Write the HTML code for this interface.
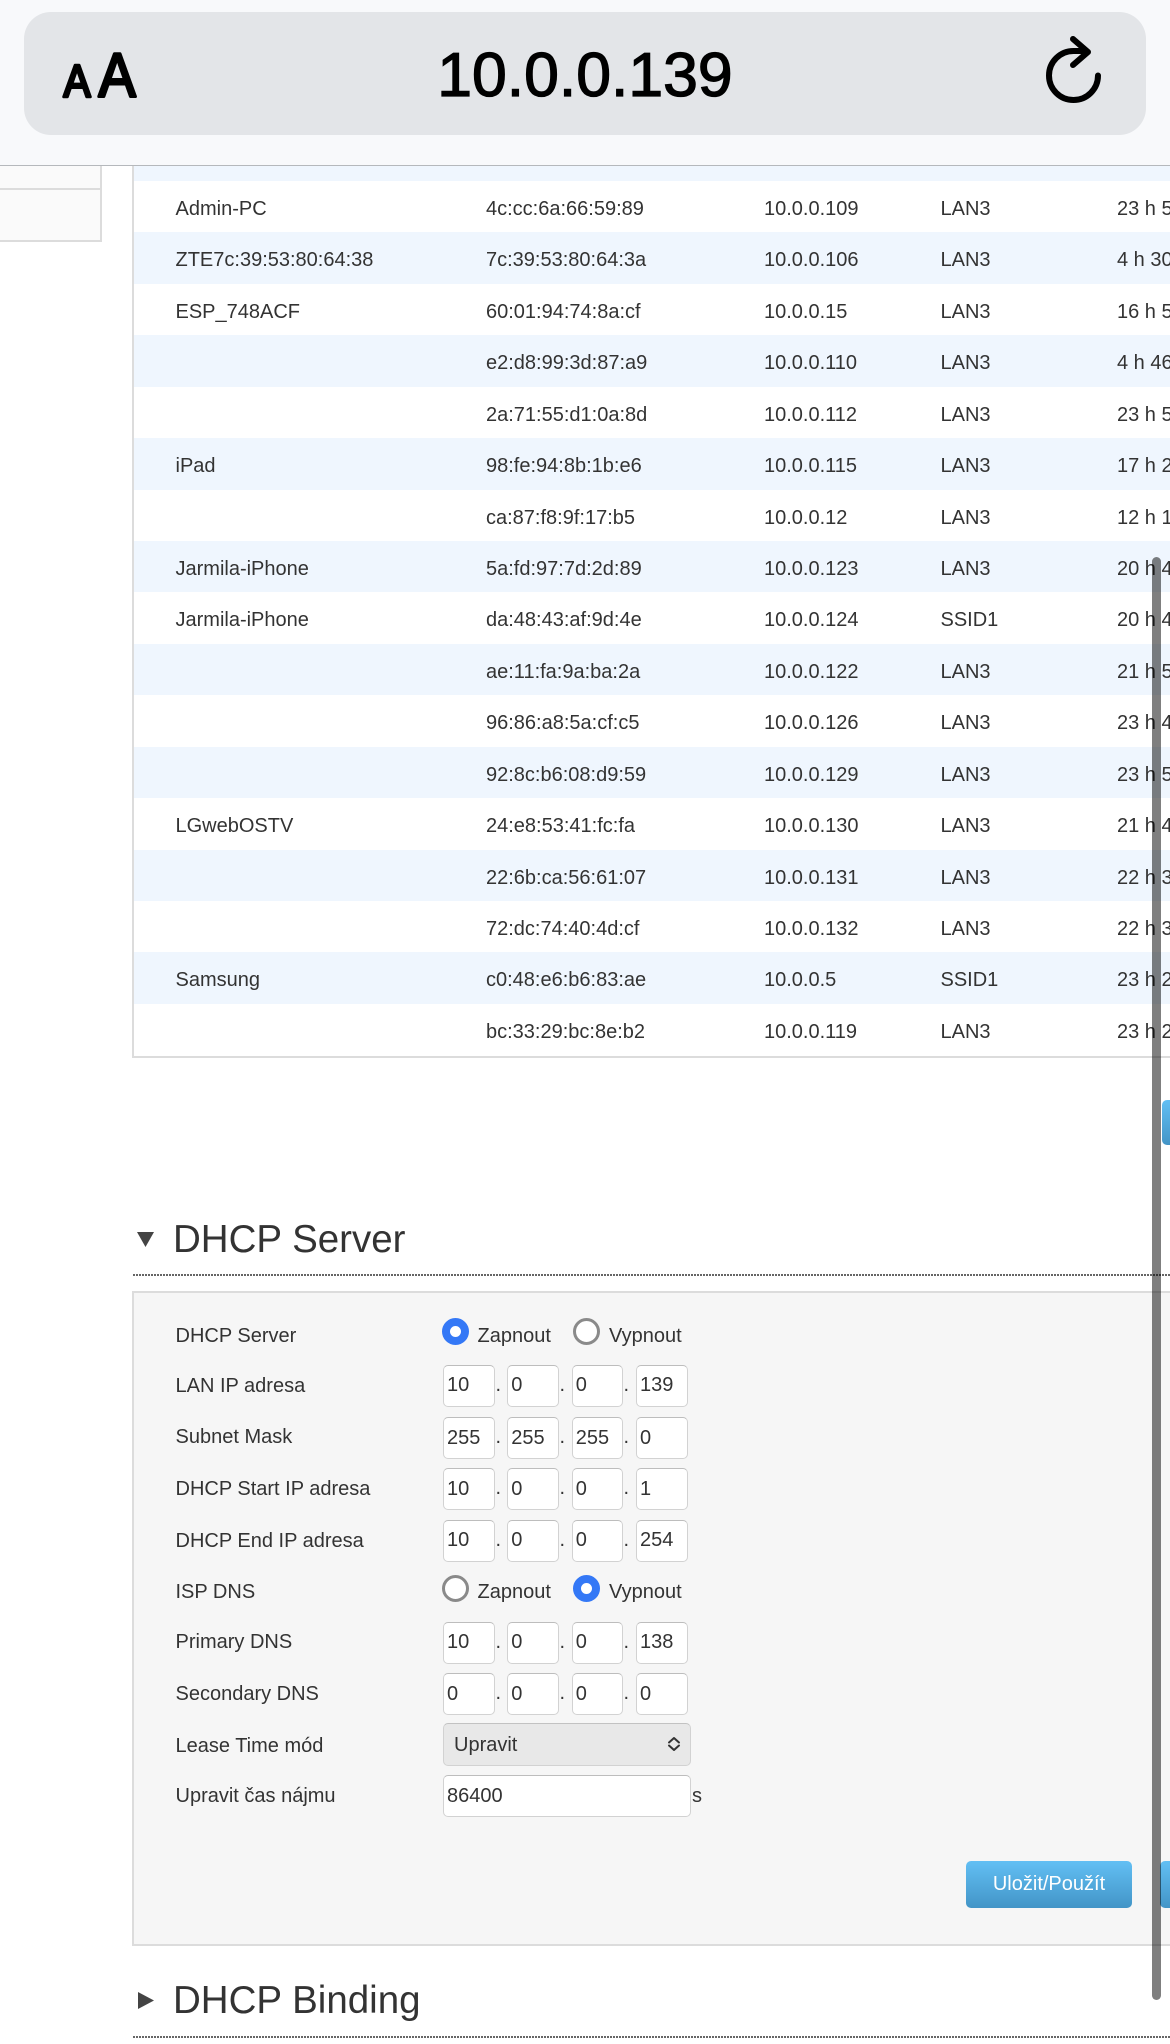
<!DOCTYPE html>
<html lang="cs"><head><meta charset="utf-8"><title>10.0.0.139</title>
<style>
html,body{margin:0;padding:0;background:#fff}
body{width:1170px;height:2044px;position:relative;overflow:hidden;font-family:"Liberation Sans",Arial,sans-serif;font-size:20px;color:#333}
div,span,svg{position:absolute;box-sizing:border-box}
.hdr{left:0;top:0;width:1170px;height:166px;background:#f8f9fb;border-bottom:1px solid #b5b8bc;z-index:5}
.bar{left:24px;top:12px;width:1122px;height:123px;background:#e3e5e8;border-radius:27px}
.url{left:0;width:1170px;top:39px;text-align:center;font-size:62.5px;line-height:72px;color:#000;-webkit-text-stroke:1.3px #000;white-space:nowrap}
.r{left:134px;width:1036px;height:51.43px;line-height:51.43px;white-space:nowrap}
.r span{top:3px}
.b{background:#eff6fe}
.r span:nth-child(1){left:41.500px}
.r span:nth-child(2){left:352px}
.r span:nth-child(3){left:630px}
.r span:nth-child(4){left:806.500px}
.r span:nth-child(5){left:983px}
.l{left:175.500px;line-height:24px;white-space:nowrap;margin-top:1px}
.i{width:51.500px;height:42px;background:#fff;border:1.500px solid #d2d2d2;border-top-color:#bdbdbd;border-radius:5px;line-height:39px;padding-left:3px;white-space:nowrap}
.i.p{line-height:41px}
.d{line-height:24px}
.rad{width:27px;height:27px;border-radius:50%;background:#fff;border:3px solid #8a8a8a}
.rad.on{border:8px solid #3478f6}
.h{font-size:38.500px;line-height:44px;white-space:nowrap;color:#333}
.dot{left:133px;width:1037px;height:2px;background:repeating-linear-gradient(90deg,#666 0 2px,transparent 2px 3px)}
.btn{border-radius:5px;background:linear-gradient(#62bff4,#4395c7);color:#fff;text-align:center;line-height:47px;white-space:nowrap}
</style></head><body>

<div style="left:0;top:166px;width:102px;height:76px;background:#fafafa;border-right:2px solid #dcdcdc;border-bottom:2px solid #dcdcdc"></div>
<div style="left:0;top:188px;width:102px;height:2px;background:#dcdcdc"></div>

<div class="b" style="left:134px;top:166px;width:1036px;height:15px"></div>
<div class="r" style="top:181px"><span>Admin-PC</span><span>4c:cc:6a:66:59:89</span><span>10.0.0.109</span><span>LAN3</span><span>23 h 59</span></div>
<div class="r b" style="top:232.400px"><span>ZTE7c:39:53:80:64:38</span><span>7c:39:53:80:64:3a</span><span>10.0.0.106</span><span>LAN3</span><span>4 h 30</span></div>
<div class="r" style="top:283.900px"><span>ESP_748ACF</span><span>60:01:94:74:8a:cf</span><span>10.0.0.15</span><span>LAN3</span><span>16 h 59</span></div>
<div class="r b" style="top:335.300px"><span></span><span>e2:d8:99:3d:87:a9</span><span>10.0.0.110</span><span>LAN3</span><span>4 h 46</span></div>
<div class="r" style="top:386.700px"><span></span><span>2a:71:55:d1:0a:8d</span><span>10.0.0.112</span><span>LAN3</span><span>23 h 59</span></div>
<div class="r b" style="top:438.100px"><span>iPad</span><span>98:fe:94:8b:1b:e6</span><span>10.0.0.115</span><span>LAN3</span><span>17 h 29</span></div>
<div class="r" style="top:489.600px"><span></span><span>ca:87:f8:9f:17:b5</span><span>10.0.0.12</span><span>LAN3</span><span>12 h 19</span></div>
<div class="r b" style="top:541px"><span>Jarmila-iPhone</span><span>5a:fd:97:7d:2d:89</span><span>10.0.0.123</span><span>LAN3</span><span>20 h 49</span></div>
<div class="r" style="top:592.400px"><span>Jarmila-iPhone</span><span>da:48:43:af:9d:4e</span><span>10.0.0.124</span><span>SSID1</span><span>20 h 49</span></div>
<div class="r b" style="top:643.900px"><span></span><span>ae:11:fa:9a:ba:2a</span><span>10.0.0.122</span><span>LAN3</span><span>21 h 59</span></div>
<div class="r" style="top:695.300px"><span></span><span>96:86:a8:5a:cf:c5</span><span>10.0.0.126</span><span>LAN3</span><span>23 h 49</span></div>
<div class="r b" style="top:746.700px"><span></span><span>92:8c:b6:08:d9:59</span><span>10.0.0.129</span><span>LAN3</span><span>23 h 59</span></div>
<div class="r" style="top:798.100px"><span>LGwebOSTV</span><span>24:e8:53:41:fc:fa</span><span>10.0.0.130</span><span>LAN3</span><span>21 h 49</span></div>
<div class="r b" style="top:849.600px"><span></span><span>22:6b:ca:56:61:07</span><span>10.0.0.131</span><span>LAN3</span><span>22 h 39</span></div>
<div class="r" style="top:901px"><span></span><span>72:dc:74:40:4d:cf</span><span>10.0.0.132</span><span>LAN3</span><span>22 h 39</span></div>
<div class="r b" style="top:952.400px"><span>Samsung</span><span>c0:48:e6:b6:83:ae</span><span>10.0.0.5</span><span>SSID1</span><span>23 h 29</span></div>
<div class="r" style="top:1003.900px"><span></span><span>bc:33:29:bc:8e:b2</span><span>10.0.0.119</span><span>LAN3</span><span>23 h 29</span></div>
<div style="left:132px;top:166px;width:2px;height:892px;background:#dcdcdc"></div>
<div style="left:132px;top:1056px;width:1038px;height:2px;background:#dcdcdc"></div>

<div class="btn" style="left:1162px;top:1100px;width:60px;height:45px"></div>

<svg style="left:136px;top:1232px" width="19" height="15" viewBox="0 0 19 15"><path d="M1 0H18L9.500 15Z" fill="#444"/></svg>
<div class="h" style="left:173px;top:1218px">DHCP Server</div>
<div class="dot" style="top:1274px"></div>

<div style="left:132px;top:1291px;width:1040px;height:655px;background:#f6f6f6;border:2px solid #dcdcdc"></div>

<div class="l" style="top:1323px">DHCP Server</div>
<div class="rad on" style="left:442px;top:1318px"></div><div class="l" style="left:477.500px;top:1323px">Zapnout</div>
<div class="rad" style="left:573px;top:1318px"></div><div class="l" style="left:609px;top:1323px">Vypnout</div>

<div class="l" style="top:1373px">LAN IP adresa</div>
<div class="i" style="left:443px;top:1365px">10</div><div class="d" style="left:495.500px;top:1373px">.</div><div class="i" style="left:507.300px;top:1365px">0</div><div class="d" style="left:559.500px;top:1373px">.</div><div class="i" style="left:571.800px;top:1365px">0</div><div class="d" style="left:623.500px;top:1373px">.</div><div class="i" style="left:636px;top:1365px">139</div>

<div class="l" style="top:1424px">Subnet Mask</div>
<div class="i p" style="left:443px;top:1417px">255</div><div class="d" style="left:495.500px;top:1425px">.</div><div class="i p" style="left:507.300px;top:1417px">255</div><div class="d" style="left:559.500px;top:1425px">.</div><div class="i p" style="left:571.800px;top:1417px">255</div><div class="d" style="left:623.500px;top:1425px">.</div><div class="i p" style="left:636px;top:1417px">0</div>

<div class="l" style="top:1476px">DHCP Start IP adresa</div>
<div class="i p" style="left:443px;top:1468px">10</div><div class="d" style="left:495.500px;top:1476px">.</div><div class="i p" style="left:507.300px;top:1468px">0</div><div class="d" style="left:559.500px;top:1476px">.</div><div class="i p" style="left:571.800px;top:1468px">0</div><div class="d" style="left:623.500px;top:1476px">.</div><div class="i p" style="left:636px;top:1468px">1</div>

<div class="l" style="top:1528px">DHCP End IP adresa</div>
<div class="i" style="left:443px;top:1520px">10</div><div class="d" style="left:495.500px;top:1528px">.</div><div class="i" style="left:507.300px;top:1520px">0</div><div class="d" style="left:559.500px;top:1528px">.</div><div class="i" style="left:571.800px;top:1520px">0</div><div class="d" style="left:623.500px;top:1528px">.</div><div class="i" style="left:636px;top:1520px">254</div>

<div class="l" style="top:1579px">ISP DNS</div>
<div class="rad" style="left:442px;top:1575px"></div><div class="l" style="left:477.500px;top:1579px">Zapnout</div>
<div class="rad on" style="left:573px;top:1575px"></div><div class="l" style="left:609px;top:1579px">Vypnout</div>

<div class="l" style="top:1629px">Primary DNS</div>
<div class="i" style="left:443px;top:1622px">10</div><div class="d" style="left:495.500px;top:1630px">.</div><div class="i" style="left:507.300px;top:1622px">0</div><div class="d" style="left:559.500px;top:1630px">.</div><div class="i" style="left:571.800px;top:1622px">0</div><div class="d" style="left:623.500px;top:1630px">.</div><div class="i" style="left:636px;top:1622px">138</div>

<div class="l" style="top:1681px">Secondary DNS</div>
<div class="i p" style="left:443px;top:1673px">0</div><div class="d" style="left:495.500px;top:1681px">.</div><div class="i p" style="left:507.300px;top:1673px">0</div><div class="d" style="left:559.500px;top:1681px">.</div><div class="i p" style="left:571.800px;top:1673px">0</div><div class="d" style="left:623.500px;top:1681px">.</div><div class="i p" style="left:636px;top:1673px">0</div>

<div class="l" style="top:1733px">Lease Time mód</div>
<div class="i" style="left:443px;top:1723px;width:248px;height:43px;background:#e8e8e8;border-color:#d2d2d2;border-top-color:#c2c2c2;padding-left:10px;line-height:43px">Upravit</div>
<svg style="left:666px;top:1735px" width="16" height="18" viewBox="0 0 16 18"><path d="M3 7.500L8 3L13 7.500M3 10.500L8 15L13 10.500" fill="none" stroke="#333" stroke-width="2" stroke-linecap="round" stroke-linejoin="round"/></svg>

<div class="l" style="top:1783px">Upravit čas nájmu</div>
<div class="i p" style="left:443px;top:1775px;width:248px">86400</div>
<div class="d" style="left:692px;top:1784px">s</div>

<div class="btn" style="left:966px;top:1861px;width:166px;height:47px">Uložit/Použít</div>
<div class="btn" style="left:1160px;top:1861px;width:60px;height:47px"></div>

<svg style="left:138px;top:1992px" width="16" height="17" viewBox="0 0 16 17"><path d="M0 0L16 8.500L0 17Z" fill="#444"/></svg>
<div class="h" style="left:173px;top:1979px">DHCP Binding</div>
<div class="dot" style="top:2036px"></div>

<div style="left:1152px;top:557px;width:9px;height:1443px;border-radius:5px;background:rgba(0,0,0,.5);z-index:4"></div>

<div class="hdr">
  <div class="bar"></div>
  <svg style="left:0;top:0" width="170" height="140" viewBox="0 0 170 140"><text transform="translate(63.500 96.500) scale(.9 1)" font-family="Liberation Sans" font-size="45" fill="#000" stroke="#000" stroke-width="3" stroke-linejoin="round">A</text><text transform="translate(98.500 96.500) scale(.9 1)" font-family="Liberation Sans" font-size="62" fill="#000" stroke="#000" stroke-width="3" stroke-linejoin="round">A</text></svg>
  <div class="url">10.0.0.139</div>
  <svg style="left:1040px;top:30px" width="70" height="90" viewBox="1040 30 70 90"><path d="M1098 75.500A24.500 24.500 0 1 1 1073.500 51H1086M1073 39L1088 52L1073 65" fill="none" stroke="#000" stroke-width="6" stroke-linecap="round" stroke-linejoin="round"/></svg>
</div>
</body></html>
